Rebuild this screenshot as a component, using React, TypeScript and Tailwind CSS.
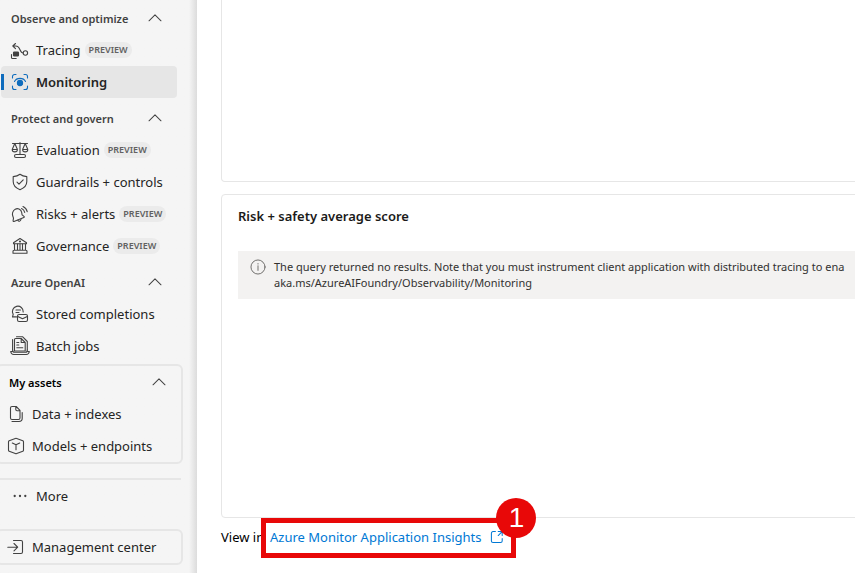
import type { ReactNode } from "react";

const ICON = "size-5 shrink-0";

function Svg({ children, className = ICON }: { children: ReactNode; className?: string }) {
  return (
    <svg
      viewBox="0 0 20 20"
      className={className}
      fill="none"
      stroke="currentColor"
      strokeWidth="1.1"
      strokeLinecap="round"
      strokeLinejoin="round"
      aria-hidden="true"
    >
      {children}
    </svg>
  );
}

const TracingIcon = () => (
  <Svg>
    <path d="M5.500 3.500 2.800 6l2.700 2.600M3.100 6h2.600c2.800 0 3.500 1.800 4.300 3.800.7 1.800 1.500 3.200 3.300 3.200" />
    <circle cx="15.400" cy="13" r="2.200" />
    <rect x="3.500" y="12" width="5" height="4" rx="0.800" fill="currentColor" />
    <path d="M1.500 14.500v2.900c0 .7.400 1.100 1.100 1.100h3.600" />
  </Svg>
);

const MonitoringIcon = () => (
  <Svg>
    <path d="M2.500 6V4.500a2 2 0 0 1 2-2H6M14 2.500h1.500a2 2 0 0 1 2 2V6M17.500 14v1.500a2 2 0 0 1-2 2H14M6 17.500H4.500a2 2 0 0 1-2-2V14" />
    <path d="M4.500 9.500C5.500 7.500 7.600 6.400 10 6.400s4.500 1.100 5.500 3.100" />
    <circle cx="10" cy="11" r="2.600" fill="currentColor" />
  </Svg>
);

const ScalesIcon = () => (
  <Svg>
    <path d="M2.500 3.500h15M10 2.500V14M4.800 3.500 2.300 9.300M4.800 3.500l2.500 5.800M15.200 3.500l-2.500 5.800M15.200 3.500l2.500 5.800M2.200 9.500h5.200c0 1.500-1 2.400-2.600 2.400s-2.600-.9-2.600-2.400ZM12.600 9.500h5.200c0 1.500-1 2.400-2.600 2.400s-2.600-.9-2.600-2.400Z" />
    <rect x="4.500" y="14.500" width="11" height="3" rx="1.500" />
  </Svg>
);

const ShieldIcon = () => (
  <Svg>
    <path d="M10 2.300c2 1.600 4.300 2.200 6.800 2.300v5c0 3.900-2.400 6.500-6.800 8.100-4.400-1.600-6.800-4.200-6.800-8.100v-5C5.700 4.500 8 3.900 10 2.300Z" />
    <path d="m7 10.200 2 2 4.200-4.400" />
  </Svg>
);

const AlertIcon = () => (
  <Svg>
    <path d="M2.700 8.300C3.600 5.400 6.500 4 9 5c1.500.7 2.500 2 2.700 3.500l.4 2.300 1.900 1.600c.4.400.3.900-.2 1.100L4 17.400c-.6.200-1-.2-.9-.8l.4-2.500-.8-2.300c-.4-1.200-.400-2.300 0-3.500Z" />
    <path d="M7.800 16.200c.7 1.600 2.900 1.400 3.200-.9M11.600 4.500c1.700.7 2.700 2 3.100 3.900M13 2.500c2.300 1 3.700 2.700 4.200 5.200" />
  </Svg>
);

const GovernanceIcon = () => (
  <Svg>
    <path d="M3.500 7.800v-1L10 2.500l6.500 4.300v1Z" />
    <path d="M4.500 8v6M7.500 8v6M10 8v6M12.500 8v6M15.500 8v6M4 14.200h12c.600 0 1 .4 1 1v2H3v-2c0-.6.400-1 1-1Z" />
    <circle cx="10" cy="5.500" r="0.500" fill="currentColor" />
  </Svg>
);

const StoredIcon = () => (
  <Svg>
    <path d="M6.500 12.900H2.500l.7-2.500A5.400 5.400 0 1 1 13.200 8M6 6h4.500M6 8.500h3" />
    <rect x="7.500" y="10.500" width="10" height="7" rx="1.600" />
    <path d="m7.800 12.500 4.700 2.300 4.800-2.300" />
  </Svg>
);

const BatchIcon = () => (
  <Svg>
    <path d="M5.500 2.500h5.700l4 4v8.500H4.500V3.500c0-.6.400-1 1-1ZM11.200 2.500v4h4M6.800 6.500h2M6.800 9h2M6.800 11.700h6" />
    <path d="M6.500.7h6l4.800 4.800v8.500M2.600 3.500v10.500M.700 15.500h1.800M17.500 15.500h1.800M.700 15.500c.3 2 1.200 3 3 3h12.600c1.800 0 2.700-1 3-3" />
    <path d="M2.600 14c0 1.500.6 2.300 2 2.300h11c1.300 0 1.700-.8 1.700-2.300" />
  </Svg>
);

const FilesIcon = () => (
  <Svg>
    <path d="M6 2.500h4.200l3.800 3.800v7.700c0 .9-.6 1.500-1.500 1.500H6c-.9 0-1.500-.6-1.500-1.500V4c0-.9.600-1.500 1.500-1.500ZM9.800 2.600v3c0 .8.400 1.200 1.200 1.200h3" />
    <path d="M6 17.500h7c2 0 3.200-1.200 3.200-3.200V8.500" />
  </Svg>
);

const CubeIcon = () => (
  <Svg>
    <path d="M9.300 2.400 3.200 4.700c-.5.200-.7.500-.7 1v8.600c0 .5.200.8.700 1l6.100 2.300c.5.200.9.200 1.400 0l6.100-2.300c.5-.2.700-.5.700-1V5.700c0-.5-.2-.8-.7-1l-6.100-2.300c-.5-.2-.9-.2-1.400 0Z" />
    <path d="M6.300 7 10 8.700 13.700 7M10 8.700v5" />
  </Svg>
);

const MoreIcon = () => (
  <Svg>
    <g fill="currentColor" stroke="none">
      <circle cx="4.700" cy="10" r="1.150" />
      <circle cx="10" cy="10" r="1.150" />
      <circle cx="15.300" cy="10" r="1.150" />
    </g>
  </Svg>
);

const EnterIcon = () => (
  <Svg>
    <path d="M1.800 10.200h9.700M8 6.500l3.700 3.700L8 13.900M7.500 3.500H15a1.500 1.500 0 0 1 1.500 1.500v10a1.500 1.500 0 0 1-1.500 1.500H7.500" />
  </Svg>
);

const InfoIcon = () => (
  <Svg className="size-4 shrink-0 text-[#605e5c]">
    <circle cx="10" cy="10" r="8.800" />
    <path d="M10 8.500v5.700M10 5.700v.6" />
  </Svg>
);

const ExternalIcon = () => (
  <Svg className="size-4 shrink-0">
    <path strokeWidth="1.300" d="M8 3.200H5a2 2 0 0 0-2 2V15a2 2 0 0 0 2 2h9.500a2 2 0 0 0 2-2v-3M11.500 3.200h5v5M16.300 3.400 11.500 8.200" />
  </Svg>
);

const Chevron = () => (
  <Svg className="size-4 shrink-0 text-[#424242]">
    <path strokeWidth="1.300" d="m2.500 13.500 7.500-7.500 7.500 7.500" />
  </Svg>
);

function SectionHeader({ label }: { label: string }) {
  return (
    <button className="flex h-9 w-full items-center justify-between pt-1 pr-[14px] pl-[11px] text-left text-[11px] font-semibold text-[#424242]">
      <span className="pt-0.5">{label}</span>
      <Chevron />
    </button>
  );
}

function NavItem({
  icon,
  label,
  preview = false,
  selected = false,
}: {
  icon: ReactNode;
  label: string;
  preview?: boolean;
  selected?: boolean;
}) {
  return (
    <a
      href="#"
      aria-current={selected ? "page" : undefined}
      className={
        selected
          ? "relative ml-px flex h-8 items-center gap-1.5 rounded bg-[#e6e6e6] pl-[9px] font-semibold text-[#242424]"
          : "flex h-8 items-center gap-1.5 pl-[10px]"
      }
    >
      {selected && <span className="absolute top-2 left-0 h-4 w-[3px] bg-[#0f6cbd]" />}
      <span className={selected ? "text-[#0f6cbd]" : "text-[#424242]"}>{icon}</span>
      <span className="pt-0.5 whitespace-nowrap">{label}</span>
      {preview && (
        <span className="-ml-0.5 rounded-full bg-[#ebebeb] px-1 text-[9px] leading-4 font-semibold text-[#616161]">
          PREVIEW
        </span>
      )}
    </a>
  );
}

function Sidebar() {
  return (
    <nav
      aria-label="Project"
      className="w-[197px] shrink-0 bg-[#f5f5f5] bg-linear-to-l from-[#dcdcdc] via-[#f5f5f5] via-[8px] to-[#f5f5f5] text-[13px] text-[#242424]"
    >
      <div className="-mt-0.5 w-[177px]">
        <SectionHeader label="Observe and optimize" />
        <NavItem icon={<TracingIcon />} label="Tracing" preview />
        <NavItem icon={<MonitoringIcon />} label="Monitoring" selected />
        <SectionHeader label="Protect and govern" />
        <NavItem icon={<ScalesIcon />} label="Evaluation" preview />
        <NavItem icon={<ShieldIcon />} label="Guardrails + controls" />
        <NavItem icon={<AlertIcon />} label="Risks + alerts" preview />
        <NavItem icon={<GovernanceIcon />} label="Governance" preview />
        <SectionHeader label="Azure OpenAI" />
        <NavItem icon={<StoredIcon />} label="Stored completions" />
        <NavItem icon={<BatchIcon />} label="Batch jobs" />
      </div>
      <section className="mt-0.5 -ml-1 w-[187px] rounded-md border-2 border-[#e6e6e6]">
        <button className="flex h-8 w-full items-center justify-between pr-[14px] pl-[11px] text-left text-[11px] font-semibold text-black">
          <span className="pt-0.5">My assets</span>
          <Chevron />
        </button>
        <div className="-ml-0.5">
          <NavItem icon={<FilesIcon />} label="Data + indexes" />
          <NavItem icon={<CubeIcon />} label="Models + endpoints" />
        </div>
      </section>
      <div className="mt-[14px] w-[181px] border-t-2 border-[#e6e6e6]">
        <NavItem icon={<MoreIcon />} label="More" />
      </div>
      <div className="mt-[17px] -ml-1 w-[187px] rounded-md border-2 border-[#e6e6e6]">
        <div className="-ml-0.5">
          <NavItem icon={<EnterIcon />} label="Management center" />
        </div>
      </div>
    </nav>
  );
}

export default function App() {
  return (
    <div className="flex min-h-screen overflow-hidden bg-white font-['Noto_Sans','Open_Sans',sans-serif]">
      <Sidebar />
      <main className="min-w-0 flex-1 overflow-hidden pl-6 text-black">
        <div className="-mr-2">
          <section className="h-[182px] rounded-b border border-t-0 border-[#e6e6e6]" />
          <section className="mt-3 h-[324px] rounded border border-[#e6e6e6] pt-[11px] pl-4">
            <h2 className="text-[13px] leading-5 font-semibold text-[#1b1a19]">Risk + safety average score</h2>
            <div className="mt-[25px] flex gap-2 bg-[#f3f2f1] py-2 pl-3 text-[11px] leading-4 text-[#323130]">
              <InfoIcon />
              <p className="whitespace-nowrap">
                The query returned no results. Note that you must instrument client application with distributed tracing to ena
                <br />
                aka.ms/AzureAIFoundry/Observability/Monitoring
              </p>
            </div>
          </section>
        </div>
        <p className="flex h-10 items-center pb-0.5 text-[13px] leading-5 whitespace-nowrap">
          <span className="w-[49px]">View in</span>
          <a href="#" className="relative flex items-center gap-2 text-[#0078d4]">
            Azure Monitor Application Insights
            <ExternalIcon />
            <span className="absolute -top-[9px] -right-[11px] -bottom-[11px] -left-[9px] border-[5px] border-[#e80808]">
              <span className="absolute -top-[25px] -right-[25px] flex size-10 items-center justify-center rounded-full bg-[#e80808] font-['Liberation_Sans',sans-serif] text-[28px] leading-none text-white">
                1
              </span>
            </span>
          </a>
        </p>
      </main>
    </div>
  );
}
